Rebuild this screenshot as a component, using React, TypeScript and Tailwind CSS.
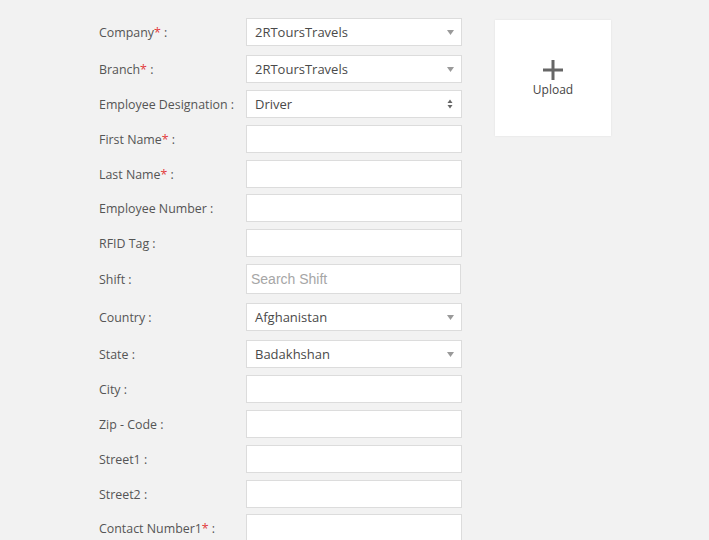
import React from "react";

type Row = {
  label: string;
  req?: boolean;
  kind: "select" | "native" | "text" | "search";
  value?: string;
  mt: string;
};

const rows: Row[] = [
  { label: "Company", req: true, kind: "select", value: "2RToursTravels", mt: "mt-0" },
  { label: "Branch", req: true, kind: "select", value: "2RToursTravels", mt: "mt-[9px]" },
  { label: "Employee Designation", kind: "native", value: "Driver", mt: "mt-[7px]" },
  { label: "First Name", req: true, kind: "text", mt: "mt-[7px]" },
  { label: "Last Name", req: true, kind: "text", mt: "mt-[7px]" },
  { label: "Employee Number", kind: "text", mt: "mt-[6px]" },
  { label: "RFID Tag", kind: "text", mt: "mt-[7px]" },
  { label: "Shift", kind: "search", mt: "mt-[7px]" },
  { label: "Country", kind: "select", value: "Afghanistan", mt: "mt-[9px]" },
  { label: "State", kind: "select", value: "Badakhshan", mt: "mt-[9px]" },
  { label: "City", kind: "text", mt: "mt-[7px]" },
  { label: "Zip - Code", kind: "text", mt: "mt-[7px]" },
  { label: "Street1", kind: "text", mt: "mt-[7px]" },
  { label: "Street2", kind: "text", mt: "mt-[7px]" },
  { label: "Contact Number1", req: true, kind: "text", mt: "mt-[6px]" },
];

function Field({ row }: { row: Row }) {
  if (row.kind === "select") {
    return (
      <div className="flex h-[28px] w-[216px] items-center justify-between border border-[#dcdcdc] bg-white pl-[8px] pr-[7px]">
        <span className="pt-[2px] text-[13px] text-[#4a4a4a]">{row.value}</span>
        <svg width="7" height="5" viewBox="0 0 7 5">
          <path d="M0 0 L7 0 L3.5 5 Z" fill="#9a9a9a" />
        </svg>
      </div>
    );
  }
  if (row.kind === "native") {
    return (
      <div className="flex h-[28px] w-[216px] items-center justify-between border border-[#dcdcdc] bg-white pl-[8px] pr-[8px]">
        <span className="pt-[2px] text-[13px] text-[#4a4a4a]">{row.value}</span>
        <svg width="6" height="10" viewBox="0 0 6 10">
          <path d="M0.5 4 L5.5 4 L3 0.5 Z" fill="#666" />
          <path d="M0.5 6 L5.5 6 L3 9.5 Z" fill="#666" />
        </svg>
      </div>
    );
  }
  if (row.kind === "search") {
    return (
      <div className="flex h-[30px] w-[215px] items-center border border-[#dcdcdc] bg-white pl-[4px]">
        <span
          className="pt-[1px] text-[14px] text-[#a6a6a6]"
          style={{ fontFamily: '"Liberation Sans", Arial, sans-serif' }}
        >
          Search Shift
        </span>
      </div>
    );
  }
  return <div className="h-[28px] w-[216px] border border-[#dcdcdc] bg-white" />;
}

export default function App() {
  return (
    <div
      className="h-[540px] w-[709px] overflow-hidden bg-[#f2f2f2]"
      style={{ fontFamily: '"Open Sans", "Noto Sans", sans-serif' }}
    >
      <div className="flex pl-[99px] pt-[18px]">
        <div className="flex flex-col">
          {rows.map((r) => (
            <div key={r.label} className={`flex items-center ${r.mt}`}>
              <div className="w-[147px] pt-[2px] text-[12.4px] text-[#555]">
                {r.label}
                {r.req && <span className="text-[#e23b3b]">*</span>} :
              </div>
              <Field row={r} />
            </div>
          ))}
        </div>
        <div className="ml-[33px] mt-[2px] flex h-[116px] w-[116px] flex-col items-center justify-center bg-white shadow-[0_0_2px_rgba(0,0,0,0.08)]">
          <svg width="22" height="22" viewBox="0 0 22 22" className="mt-[2px]">
            <rect x="9.5" y="1" width="3" height="20" fill="#666" />
            <rect x="1" y="9.5" width="20" height="3" fill="#666" />
          </svg>
          <span className="mt-[0px] text-[12px] text-[#444]">Upload</span>
        </div>
      </div>
    </div>
  );
}
